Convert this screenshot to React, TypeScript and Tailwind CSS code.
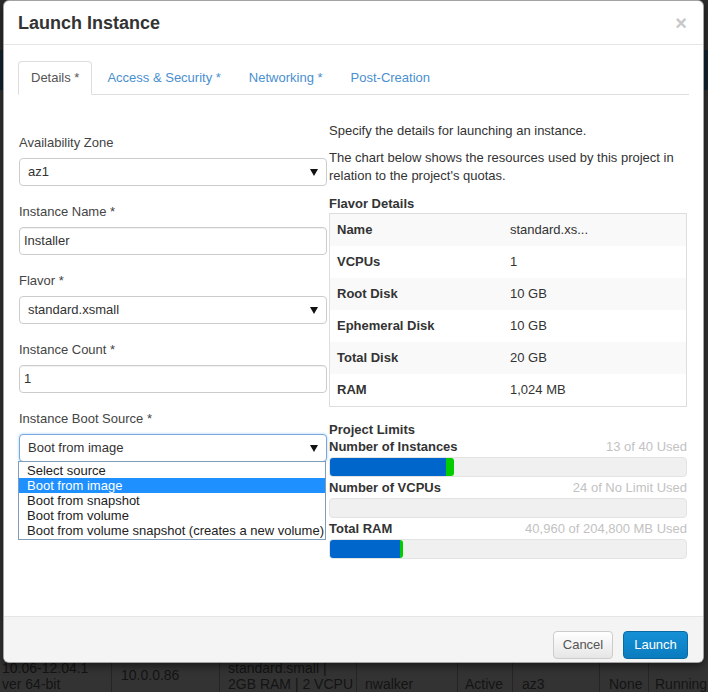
import React from "react";

function Caret() {
  return (
    <svg width="8" height="7" viewBox="0 0 8 7" className="shrink-0">
      <path d="M0 0 H8 L4 7 Z" fill="#111" />
    </svg>
  );
}

function SelectBox({ value, focused }: { value: string; focused?: boolean }) {
  return (
    <div
      className={
        "flex h-[28px] items-center justify-between rounded-[4px] border bg-white pl-[8px] pr-[8px] text-[13px] text-[#333] " +
        (focused
          ? "border-[#7aa7dd] shadow-[0_0_3px_rgba(102,175,233,0.6)]"
          : "border-[#cccccc]")
      }
    >
      <span>{value}</span>
      <Caret />
    </div>
  );
}

function TextBox({ value }: { value: string }) {
  return (
    <div className="flex h-[28px] items-center rounded-[4px] border border-[#cccccc] bg-white pl-[4px] text-[13px] text-[#333] shadow-[inset_0_1px_1px_rgba(0,0,0,0.06)]">
      {value}
    </div>
  );
}

function Field({ label, children, last }: { label: string; children: React.ReactNode; last?: boolean }) {
  return (
    <div className={last ? "" : "mb-[17px]"}>
      <div className="mb-[6px] text-[13px] leading-[18px] text-[#444]">{label}</div>
      {children}
    </div>
  );
}

const flavorRows: [string, string][] = [
  ["Name", "standard.xs..."],
  ["VCPUs", "1"],
  ["Root Disk", "10 GB"],
  ["Ephemeral Disk", "10 GB"],
  ["Total Disk", "20 GB"],
  ["RAM", "1,024 MB"],
];

function Limit({ name, used, blue, green }: { name: string; used: string; blue: number; green: number }) {
  return (
    <div className="mb-[2px]">
      <div className="flex items-center justify-between text-[13px] leading-[18px]">
        <span className="font-bold text-[#333]">{name}</span>
        <span className="text-[#c2c2c2]">{used}</span>
      </div>
      <div className="mt-[1px] flex h-[20px] overflow-hidden rounded-[4px] border border-[#e3e3e3] bg-[#f0f0f0]">
        {blue > 0 && <div className="h-full bg-[#0066cc]" style={{ width: `${blue}%` }} />}
        {green > 0 && (
          <div className="h-full rounded-r-[3px] bg-[#00cc00]" style={{ width: `${green}%` }} />
        )}
      </div>
    </div>
  );
}

export default function App() {
  const bootOptions = [
    "Select source",
    "Boot from image",
    "Boot from snapshot",
    "Boot from volume",
    "Boot from volume snapshot (creates a new volume)",
  ];
  return (
    <div className="relative h-[692px] w-[708px] overflow-hidden bg-[#303030] font-['Liberation_Sans',Arial,sans-serif]">
      {/* backdrop page */}
      <div className="flex h-full flex-col">
        <div className="h-[50px] bg-[#2c2c2c]" />
        <div className="h-[40px] bg-[#12242f]" />
        <div className="flex-1 bg-[#313131]" />
        <div className="grid h-[32px] grid-cols-[112px_108px_137px_101px_55px_87px_49px_59px] overflow-hidden bg-[#333333] text-[14px] leading-[16px] text-[#141414]">
          <div className="overflow-hidden whitespace-nowrap border-r border-[#252525] pl-[2px]">
            <div>10.06-12.04.1</div>
            <div>ver 64-bit</div>
          </div>
          <div className="border-r border-[#252525] pl-[9px] pt-[7px]">10.0.0.86</div>
          <div className="overflow-hidden whitespace-nowrap border-r border-[#252525] pl-[8px]">
            <div>standard.small |</div>
            <div>2GB RAM | 2 VCPU</div>
          </div>
          <div className="border-r border-[#252525] pl-[8px] pt-[16px]">nwalker</div>
          <div className="border-r border-[#252525] pl-[7px] pt-[16px]">Active</div>
          <div className="border-r border-[#252525] pl-[9px] pt-[16px]">az3</div>
          <div className="border-r border-[#252525] pl-[9px] pt-[16px]">None</div>
          <div className="whitespace-nowrap pl-[6px] pt-[16px]">Running</div>
        </div>
      </div>

      {/* modal */}
      <div className="absolute left-[3px] top-0 flex h-[663px] w-[701px] flex-col overflow-hidden rounded-[6px] border border-[#1a1a1a]/40 bg-white shadow-[0_3px_9px_rgba(0,0,0,0.5)]">
        {/* header */}
        <div className="flex h-[44px] shrink-0 items-center justify-between border-b border-[#e5e5e5] pl-[14px] pr-[16px]">
          <h4 className="text-[18px] font-bold leading-[20px] text-[#333]">Launch Instance</h4>
          <span className="text-[20px] font-bold leading-[20px] text-[#c8c8c8]">×</span>
        </div>

        {/* body */}
        <div className="flex-1 px-[14px] pt-[16px]">
          {/* tabs */}
          <div className="flex h-[34px] border-b border-[#dddddd] text-[13px]">
            <div className="-mb-px flex items-center rounded-t-[4px] border border-[#dddddd] border-b-white bg-white px-[12px] text-[#555]">
              Details *
            </div>
            <div className="ml-[2px] flex items-center border border-transparent px-[12px] text-[#4a8fd0]">
              Access &amp; Security *
            </div>
            <div className="ml-[2px] flex items-center border border-transparent px-[12px] text-[#4a8fd0]">
              Networking *
            </div>
            <div className="ml-[2px] flex items-center border border-transparent px-[12px] text-[#4a8fd0]">
              Post-Creation
            </div>
          </div>

          <div className="grid grid-cols-[309px_358px] gap-[2px]">
            {/* left form */}
            <div className="pl-[1px] pt-[39px]">
              <Field label="Availability Zone">
                <SelectBox value="az1" />
              </Field>
              <Field label="Instance Name *">
                <TextBox value="Installer" />
              </Field>
              <Field label="Flavor *">
                <SelectBox value="standard.xsmall" />
              </Field>
              <Field label="Instance Count *">
                <TextBox value="1" />
              </Field>
              <Field label="Instance Boot Source *" last>
                <SelectBox value="Boot from image" focused />
                <div className="-ml-[1px] -mt-px mr-[1px] border border-[#7f9db9] bg-white py-px text-[13px] leading-[15px] text-[#222]">
                  {bootOptions.map((o, i) => (
                    <div
                      key={o}
                      className={
                        "whitespace-nowrap pl-[8px] " + (i === 1 ? "bg-[#1e90ff] text-white" : "")
                      }
                    >
                      {o}
                    </div>
                  ))}
                </div>
              </Field>
            </div>

            {/* right info */}
            <div className="pt-[27px] text-[13px] leading-[18px] text-[#333]">
              <p className="mb-[9px]">Specify the details for launching an instance.</p>
              <p className="mb-[10px]">
                The chart below shows the resources used by this project in relation to the project's quotas.
              </p>
              <div className="font-bold">Flavor Details</div>
              <div className="border border-[#dddddd]">
                {flavorRows.map(([k, v], i) => (
                  <div
                    key={k}
                    className={"flex h-[32px] items-center " + (i % 2 === 0 ? "bg-[#f9f9f9]" : "bg-white")}
                  >
                    <div className="w-[172px] pl-[7px] font-bold">{k}</div>
                    <div className="pl-[8px]">{v}</div>
                  </div>
                ))}
              </div>
              <div className="mt-[14px] font-bold leading-[17px]">Project Limits</div>
              <Limit name="Number of Instances" used="13 of 40 Used" blue={32.5} green={2.2} />
              <Limit name="Number of VCPUs" used="24 of No Limit Used" blue={0} green={0} />
              <Limit name="Total RAM" used="40,960 of 204,800 MB Used" blue={19.8} green={0.8} />
            </div>
          </div>
        </div>

        {/* footer */}
        <div className="flex h-[46px] shrink-0 items-start justify-end gap-[10px] border-t border-[#e5e5e5] bg-[#f4f4f4] pr-[15px] pt-[14px]">
          <button className="h-[28px] w-[60px] rounded-[4px] border border-[#cccccc] bg-gradient-to-b from-white to-[#e6e6e6] text-[13px] text-[#555]">
            Cancel
          </button>
          <button className="h-[28px] w-[65px] rounded-[4px] border border-[#0a6ba3] bg-gradient-to-b from-[#1590d6] to-[#0a7cbf] text-[13px] text-white">
            Launch
          </button>
        </div>
      </div>
    </div>
  );
}
